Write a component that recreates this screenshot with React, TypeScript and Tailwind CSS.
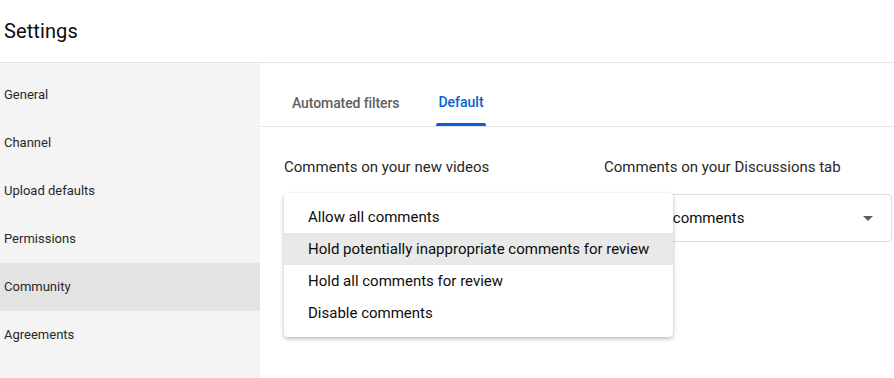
import React from "react";

const font = { fontFamily: "Roboto, 'Noto Sans', Arial, sans-serif" };

export default function App() {
  const nav = ["General", "Channel", "Upload defaults", "Permissions", "Community", "Agreements"];
  const opts = [
    "Allow all comments",
    "Hold potentially inappropriate comments for review",
    "Hold all comments for review",
    "Disable comments",
  ];
  return (
    <div className="w-[894px] h-[378px] overflow-hidden bg-white flex flex-col text-[#0d0d0d]" style={font}>
      <div className="h-[63px] shrink-0 border-b border-[#e3e3e3] flex items-center pl-[4px]">
        <span className="text-[20px] text-[#0d0d0d] tracking-[0.1px]">Settings</span>
      </div>
      <div className="flex flex-1 min-h-0">
        <div className="w-[260px] shrink-0 bg-[#f4f4f4] pt-[8px] flex flex-col">
          {nav.map((n) => (
            <div
              key={n}
              className={`h-[48px] flex items-center pl-[4px] text-[13px] text-[#282828] ${n === "Community" ? "bg-[#e3e3e3]" : ""}`}
            >
              {n}
            </div>
          ))}
        </div>
        <div className="flex-1 flex flex-col relative">
          <div className="h-[64px] shrink-0 border-b border-[#e3e3e3] flex items-end pl-[32px] gap-[37px]">
            <div className="h-[63px] flex items-center pt-[17px] text-[14px] font-medium text-[#606060] tracking-[-0.1px]">Automated filters</div>
            <div className="h-[63px] flex flex-col items-center justify-end">
              <div className="flex-1 flex items-center pt-[19px] px-[2px] text-[14px] font-medium text-[#065fd4]">Default</div>
              <div className="h-[3px] w-full bg-[#065fd4] rounded-t-[2px]"></div>
            </div>
          </div>
          <div className="flex pl-[24px] pt-[30px]">
            <div className="w-[320px] flex flex-col">
              <div className="text-[15px] text-[#282828] h-[20px] leading-[20px]">Comments on your new videos</div>
              <div className="mt-[17px] w-[296px] h-[48px] border border-[#dcdcdc] rounded-[4px] flex items-center px-[16px] text-[15px]">
                Hold potentially inappropriate comments for review
              </div>
            </div>
            <div className="w-[288px] flex flex-col">
              <div className="text-[15px] text-[#282828] h-[20px] leading-[20px]">Comments on your Discussions tab</div>
              <div className="mt-[17px] w-[288px] h-[48px] border border-[#dcdcdc] rounded-[4px] flex items-center justify-between pl-[8px] pr-[18px] text-[15px] text-[#0d0d0d]">
                <span>Allow all comments</span>
                <svg width="10" height="5" viewBox="0 0 10 5"><path d="M0 0 L10 0 L5 5 Z" fill="#606060" /></svg>
              </div>
            </div>
          </div>
          <div className="absolute left-[24px] top-[130px] w-[389px] bg-white rounded-[4px] py-[8px] shadow-[0_2px_4px_rgba(0,0,0,0.25),0_0_2px_rgba(0,0,0,0.08)] z-10">
            {opts.map((o, i) => (
              <div
                key={o}
                className={`h-[32px] flex items-center pl-[24px] text-[15px] text-[#0d0d0d] ${i === 1 ? "bg-[#e9e9e9]" : ""}`}
              >
                {o}
              </div>
            ))}
          </div>
        </div>
      </div>
    </div>
  );
}
